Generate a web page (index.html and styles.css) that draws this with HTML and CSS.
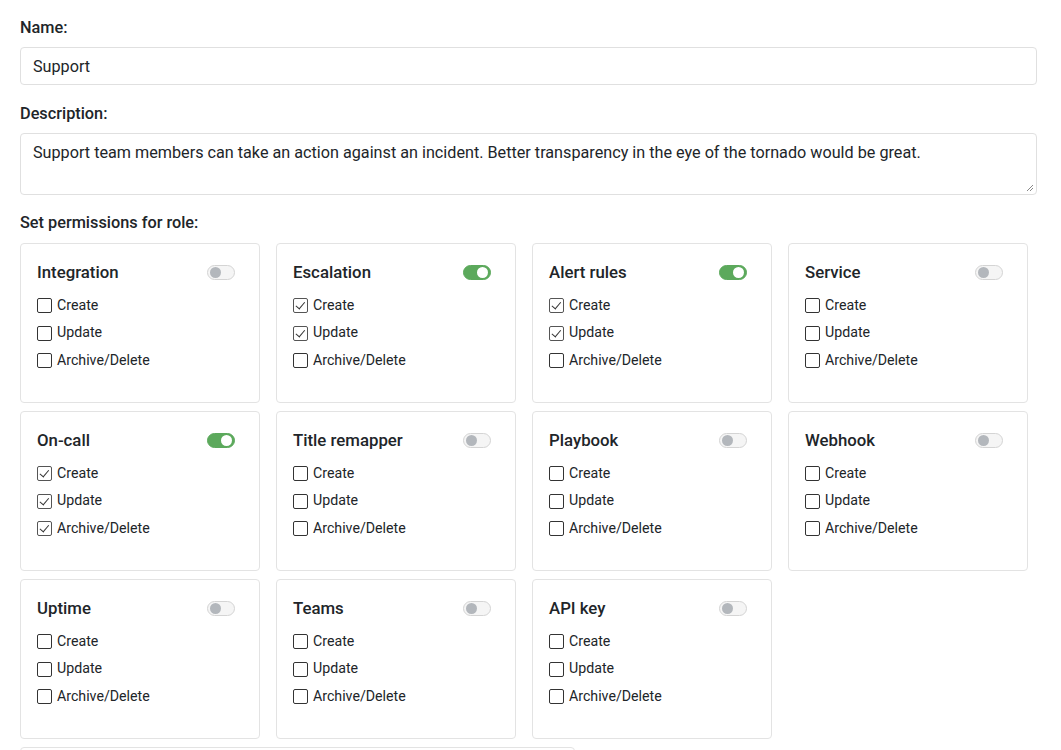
FILE: index.html
```
<!DOCTYPE html>
<html>
<head>
<meta charset="utf-8">
<link rel="stylesheet" href="styles.css">
</head>
<body>
<div class="page">
  <div class="field">
    <label class="label">Name:</label>
    <div class="input">Support</div>
  </div>
  <div class="field">
    <label class="label">Description:</label>
    <div class="textarea">Support team members can take an action against an incident. Better transparency in the eye of the tornado would be great.
      <svg class="grip" width="8" height="8" viewBox="0 0 8 8"><path d="M7 1L1 7M7 4L4 7" stroke="#888" stroke-width="1"/></svg>
    </div>
  </div>
  <div class="label perm-label">Set permissions for role:</div>
  <div class="grid">
    <div class="card">
      <div class="card-head"><span class="title">Integration</span><span class="toggle"></span></div>
      <div class="opt"><span class="cb"></span>Create</div>
      <div class="opt"><span class="cb"></span>Update</div>
      <div class="opt"><span class="cb"></span>Archive/Delete</div>
    </div>
    <div class="card">
      <div class="card-head"><span class="title">Escalation</span><span class="toggle on"></span></div>
      <div class="opt"><span class="cb on"></span>Create</div>
      <div class="opt"><span class="cb on"></span>Update</div>
      <div class="opt"><span class="cb"></span>Archive/Delete</div>
    </div>
    <div class="card">
      <div class="card-head"><span class="title">Alert rules</span><span class="toggle on"></span></div>
      <div class="opt"><span class="cb on"></span>Create</div>
      <div class="opt"><span class="cb on"></span>Update</div>
      <div class="opt"><span class="cb"></span>Archive/Delete</div>
    </div>
    <div class="card">
      <div class="card-head"><span class="title">Service</span><span class="toggle"></span></div>
      <div class="opt"><span class="cb"></span>Create</div>
      <div class="opt"><span class="cb"></span>Update</div>
      <div class="opt"><span class="cb"></span>Archive/Delete</div>
    </div>
    <div class="card">
      <div class="card-head"><span class="title">On-call</span><span class="toggle on"></span></div>
      <div class="opt"><span class="cb on"></span>Create</div>
      <div class="opt"><span class="cb on"></span>Update</div>
      <div class="opt"><span class="cb on"></span>Archive/Delete</div>
    </div>
    <div class="card">
      <div class="card-head"><span class="title">Title remapper</span><span class="toggle"></span></div>
      <div class="opt"><span class="cb"></span>Create</div>
      <div class="opt"><span class="cb"></span>Update</div>
      <div class="opt"><span class="cb"></span>Archive/Delete</div>
    </div>
    <div class="card">
      <div class="card-head"><span class="title">Playbook</span><span class="toggle"></span></div>
      <div class="opt"><span class="cb"></span>Create</div>
      <div class="opt"><span class="cb"></span>Update</div>
      <div class="opt"><span class="cb"></span>Archive/Delete</div>
    </div>
    <div class="card">
      <div class="card-head"><span class="title">Webhook</span><span class="toggle"></span></div>
      <div class="opt"><span class="cb"></span>Create</div>
      <div class="opt"><span class="cb"></span>Update</div>
      <div class="opt"><span class="cb"></span>Archive/Delete</div>
    </div>
    <div class="card">
      <div class="card-head"><span class="title">Uptime</span><span class="toggle"></span></div>
      <div class="opt"><span class="cb"></span>Create</div>
      <div class="opt"><span class="cb"></span>Update</div>
      <div class="opt"><span class="cb"></span>Archive/Delete</div>
    </div>
    <div class="card">
      <div class="card-head"><span class="title">Teams</span><span class="toggle"></span></div>
      <div class="opt"><span class="cb"></span>Create</div>
      <div class="opt"><span class="cb"></span>Update</div>
      <div class="opt"><span class="cb"></span>Archive/Delete</div>
    </div>
    <div class="card">
      <div class="card-head"><span class="title">API key</span><span class="toggle"></span></div>
      <div class="opt"><span class="cb"></span>Create</div>
      <div class="opt"><span class="cb"></span>Update</div>
      <div class="opt"><span class="cb"></span>Archive/Delete</div>
    </div>
  </div>
  <div class="bottom"></div>
</div>
</body>
</html>
```
FILE: styles.css
```
* { box-sizing: border-box; }
html, body { margin: 0; padding: 0; background: #fff; }
body {
  font-family: Roboto, "Noto Sans", sans-serif;
  color: #212529;
  overflow: hidden;
  height: 750px;
}
.page { padding: 18px 24px 0 20px; }
.field + .field { margin-top: 19px; }
.label {
  display: block;
  font-size: 16.3px;
  font-weight: 500;
  line-height: 20px;
  margin-bottom: 9px;
}
.input {
  height: 38px;
  border: 1px solid #e0e0e0;
  border-radius: 4px;
  padding: 1px 12px 0;
  font-size: 16.2px;
  line-height: 36px;
}
.textarea {
  position: relative;
  height: 62px;
  border: 1px solid #e0e0e0;
  border-radius: 4px;
  padding: 8px 12px;
  font-size: 16.2px;
  line-height: 22px;
}
.grip { position: absolute; right: 2px; bottom: 2px; }
.perm-label { margin-top: 18px; margin-bottom: 10px; }
.grid {
  display: grid;
  grid-template-columns: repeat(4, 240px);
  column-gap: 16px;
  row-gap: 8px;
}
.card {
  height: 160px;
  border: 1px solid #e3e3e3;
  border-radius: 4px;
  padding: 18px 16px 0 16px;
}
.card-head {
  display: flex;
  justify-content: space-between;
  align-items: center;
  width: 198px;
  height: 20px;
  margin-bottom: 9px;
}
.title { font-size: 16.8px; font-weight: 500; }
.toggle {
  position: relative;
  width: 28px;
  height: 15px;
  border: 1px solid #d4d4d4;
  background: #f5f5f5;
  border-radius: 8px;
}
.toggle::after {
  content: "";
  position: absolute;
  left: 2px; top: 1px;
  width: 11px; height: 11px;
  border-radius: 50%;
  background: #b3b7bc;
}
.toggle.on { background: #5ca95c; border-color: #5ca95c; }
.toggle.on::after { left: auto; right: 2px; background: #fff; }
.opt {
  display: flex;
  align-items: center;
  height: 27.5px;
  font-size: 14.2px;
}
.cb {
  width: 15px; height: 15px;
  border: 1.5px solid #333;
  border-radius: 2px;
  margin-right: 5px;
  position: relative;
  top: 1px;
}
.cb.on { border-color: #555; }
.cb.on::after {
  content: "";
  position: absolute;
  left: 3.5px; top: 1px;
  width: 4px; height: 7.5px;
  border-right: 1.5px solid #333;
  border-bottom: 1.5px solid #333;
  transform: rotate(40deg);
}
.bottom {
  margin-top: 8px;
  width: 555px;
  height: 40px;
  border: 1px solid #e3e3e3;
  border-radius: 4px;
}
```
